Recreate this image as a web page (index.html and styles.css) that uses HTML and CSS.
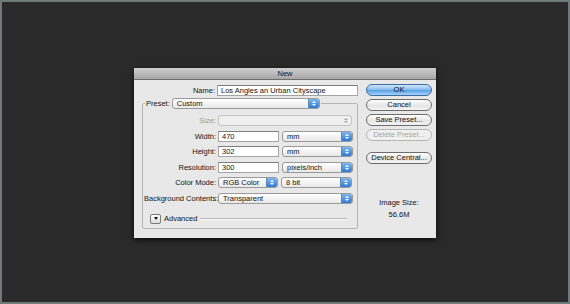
FILE: index.html
```html
<!DOCTYPE html>
<html>
<head>
    <title>New</title>
    <link rel="stylesheet" href="styles.css">
</head>
<body>
    <div class="screen">
        <div class="dialog">
            <div class="title-bar">New</div>
            <div class="dialog-body">
                <div class="left-col">
                    <div class="name-row">
                        <span class="label">Name:</span>
                        <span class="field name-field">Los Angles an Urban Cityscape</span>
                    </div>
                    <div class="preset-group">
                        <div class="preset-head">
                            <span class="preset-label">Preset:</span>
                            <span class="select preset-select">Custom<span class="arrows"></span></span>
                        </div>
                        <div class="form-grid">
                            <span class="label disabled">Size:</span>
                            <span class="select size-select disabled-select"><span class="arrows"></span></span>

                            <span class="label">Width:</span>
                            <span class="pair"><span class="field num-field">470</span><span class="select unit-select">mm<span class="arrows"></span></span></span>

                            <span class="label">Height:</span>
                            <span class="pair"><span class="field num-field">302</span><span class="select unit-select">mm<span class="arrows"></span></span></span>

                            <span class="label">Resolution:</span>
                            <span class="pair"><span class="field num-field">300</span><span class="select unit-select">pixels/inch<span class="arrows"></span></span></span>

                            <span class="label">Color Mode:</span>
                            <span class="pair"><span class="select mode-select">RGB Color<span class="arrows"></span></span><span class="select unit-select">8 bit<span class="arrows"></span></span></span>

                            <span class="label">Background Contents:</span>
                            <span class="select bg-select">Transparent<span class="arrows"></span></span>
                        </div>
                        <div class="advanced-row">
                            <span class="disclosure"></span>
                            <span class="advanced-text">Advanced</span>
                            <span class="advanced-line"></span>
                        </div>
                    </div>
                </div>
                <div class="right-col">
                    <div class="button ok-button">OK</div>
                    <div class="button">Cancel</div>
                    <div class="button">Save Preset...</div>
                    <div class="button disabled-button">Delete Preset...</div>
                    <div class="button device-button">Device Central...</div>
                    <div class="image-size">
                        <div>Image Size:</div>
                        <div>56.6M</div>
                    </div>
                </div>
            </div>
        </div>
    </div>
</body>
</html>
```

FILE: styles.css
```css
body {
    margin: 0;
    font-family: "Liberation Sans", Arial, sans-serif;
    font-size: 7.5px;
    color: #141414;
}
.screen {
    width: 570px;
    height: 304px;
    box-sizing: border-box;
    border: 2px solid #6e797c;
    background-color: #2a2a2a;
    display: flex;
    justify-content: center;
    padding-top: 66px;
}
.dialog {
    width: 302px;
    height: 170px;
    display: flex;
    flex-direction: column;
    background-color: #e8e8e8;
    box-shadow: 0 2px 6px rgba(0, 0, 0, 0.7);
}
.title-bar {
    height: 11px;
    line-height: 11px;
    text-align: center;
    background: linear-gradient(#cfcfcf, #a6a6a6);
    border-bottom: 1px solid #6f6f6f;
}
.dialog-body {
    display: flex;
    gap: 8px;
    padding: 5px 4px 0 8px;
}
.left-col {
    width: 216px;
}
.name-row {
    display: flex;
    align-items: center;
    height: 11px;
}
.name-row .label {
    width: 73px;
    margin-right: 2px;
}
.label {
    text-align: right;
    white-space: nowrap;
}
.label.disabled {
    color: #9a9a9a;
}
.field {
    box-sizing: border-box;
    height: 11px;
    line-height: 10px;
    padding-left: 3px;
    background-color: #fff;
    border: 1px solid #a4a4a4;
    border-top-color: #7c7c7c;
}
.name-field {
    width: 141px;
}
.num-field {
    width: 61px;
}
.preset-group {
    margin-top: 7px;
    height: 124px;
    border: 1px solid #b5b5b5;
    border-radius: 2px;
}
.preset-head {
    display: flex;
    align-items: center;
    width: fit-content;
    margin: -6px 0 0 2px;
    padding: 0 1px;
    background-color: #e8e8e8;
}
.preset-label {
    margin-right: 2px;
}
.select {
    box-sizing: border-box;
    height: 11px;
    display: flex;
    align-items: center;
    padding-left: 4px;
    background: linear-gradient(#ffffff, #e8e8e8);
    border: 1px solid #9a9a9a;
    border-radius: 3px;
    white-space: nowrap;
    overflow: hidden;
}
.arrows {
    width: 10px;
    height: 100%;
    margin-left: auto;
    display: flex;
    flex-direction: column;
    align-items: center;
    justify-content: center;
    gap: 1px;
    background: linear-gradient(#7fb6ee, #2f7ad6);
    border-left: 1px solid #5a86b8;
}
.arrows::before,
.arrows::after {
    content: "";
    border-left: 2px solid transparent;
    border-right: 2px solid transparent;
}
.arrows::before {
    border-bottom: 2px solid #fff;
}
.arrows::after {
    border-top: 2px solid #fff;
}
.disabled-select {
    background: #efefef;
    border-color: #c4c4c4;
}
.disabled-select .arrows {
    background: none;
    border-left: none;
}
.disabled-select .arrows::before {
    border-bottom-color: #a8a8a8;
}
.disabled-select .arrows::after {
    border-top-color: #a8a8a8;
}
.preset-select {
    width: 148px;
}
.form-grid {
    display: grid;
    grid-template-columns: 72px auto;
    grid-auto-rows: 11px;
    column-gap: 2px;
    row-gap: 4.5px;
    align-items: center;
    margin-top: 6px;
    padding-left: 1px;
}
.pair {
    display: flex;
    gap: 3px;
}
.size-select {
    width: 134px;
}
.unit-select {
    width: 71px;
}
.mode-select {
    width: 60px;
}
.bg-select {
    width: 135px;
}
.advanced-row {
    display: flex;
    align-items: center;
    margin-top: 10px;
    height: 10px;
    padding: 0 10px 0 7px;
}
.disclosure {
    box-sizing: border-box;
    width: 11px;
    height: 10px;
    display: flex;
    align-items: center;
    justify-content: center;
    border: 1px solid #7a7a7a;
    border-radius: 2px;
    background: linear-gradient(#ffffff, #dcdcdc);
}
.disclosure::before {
    content: "";
    border-left: 2.5px solid transparent;
    border-right: 2.5px solid transparent;
    border-top: 3px solid #111;
}
.advanced-text {
    margin-left: 3px;
}
.advanced-line {
    flex: 1;
    margin-left: 3px;
    height: 0;
    border-top: 1px solid #b3b3b3;
    border-bottom: 1px solid #fafafa;
}
.right-col {
    width: 66px;
    margin-top: -1px;
    display: flex;
    flex-direction: column;
    gap: 3px;
}
.button {
    box-sizing: border-box;
    height: 12px;
    line-height: 10px;
    text-align: center;
    white-space: nowrap;
    border: 1px solid #6c6c6c;
    border-radius: 6px;
    background: linear-gradient(#ffffff, #e6e6e6 55%, #f3f3f3);
}
.ok-button {
    border-color: #3c6ea6;
    background: linear-gradient(#cfe6fb, #83bbef 50%, #5ea3e6 55%, #a7d2f8);
}
.disabled-button {
    color: #a5a5a5;
    border-color: #b5b5b5;
    background: #f0f0f0;
}
.device-button {
    margin-top: 8px;
}
.image-size {
    margin-top: 30px;
    text-align: center;
    line-height: 11px;
    display: flex;
    flex-direction: column;
    gap: 1px;
}
```
